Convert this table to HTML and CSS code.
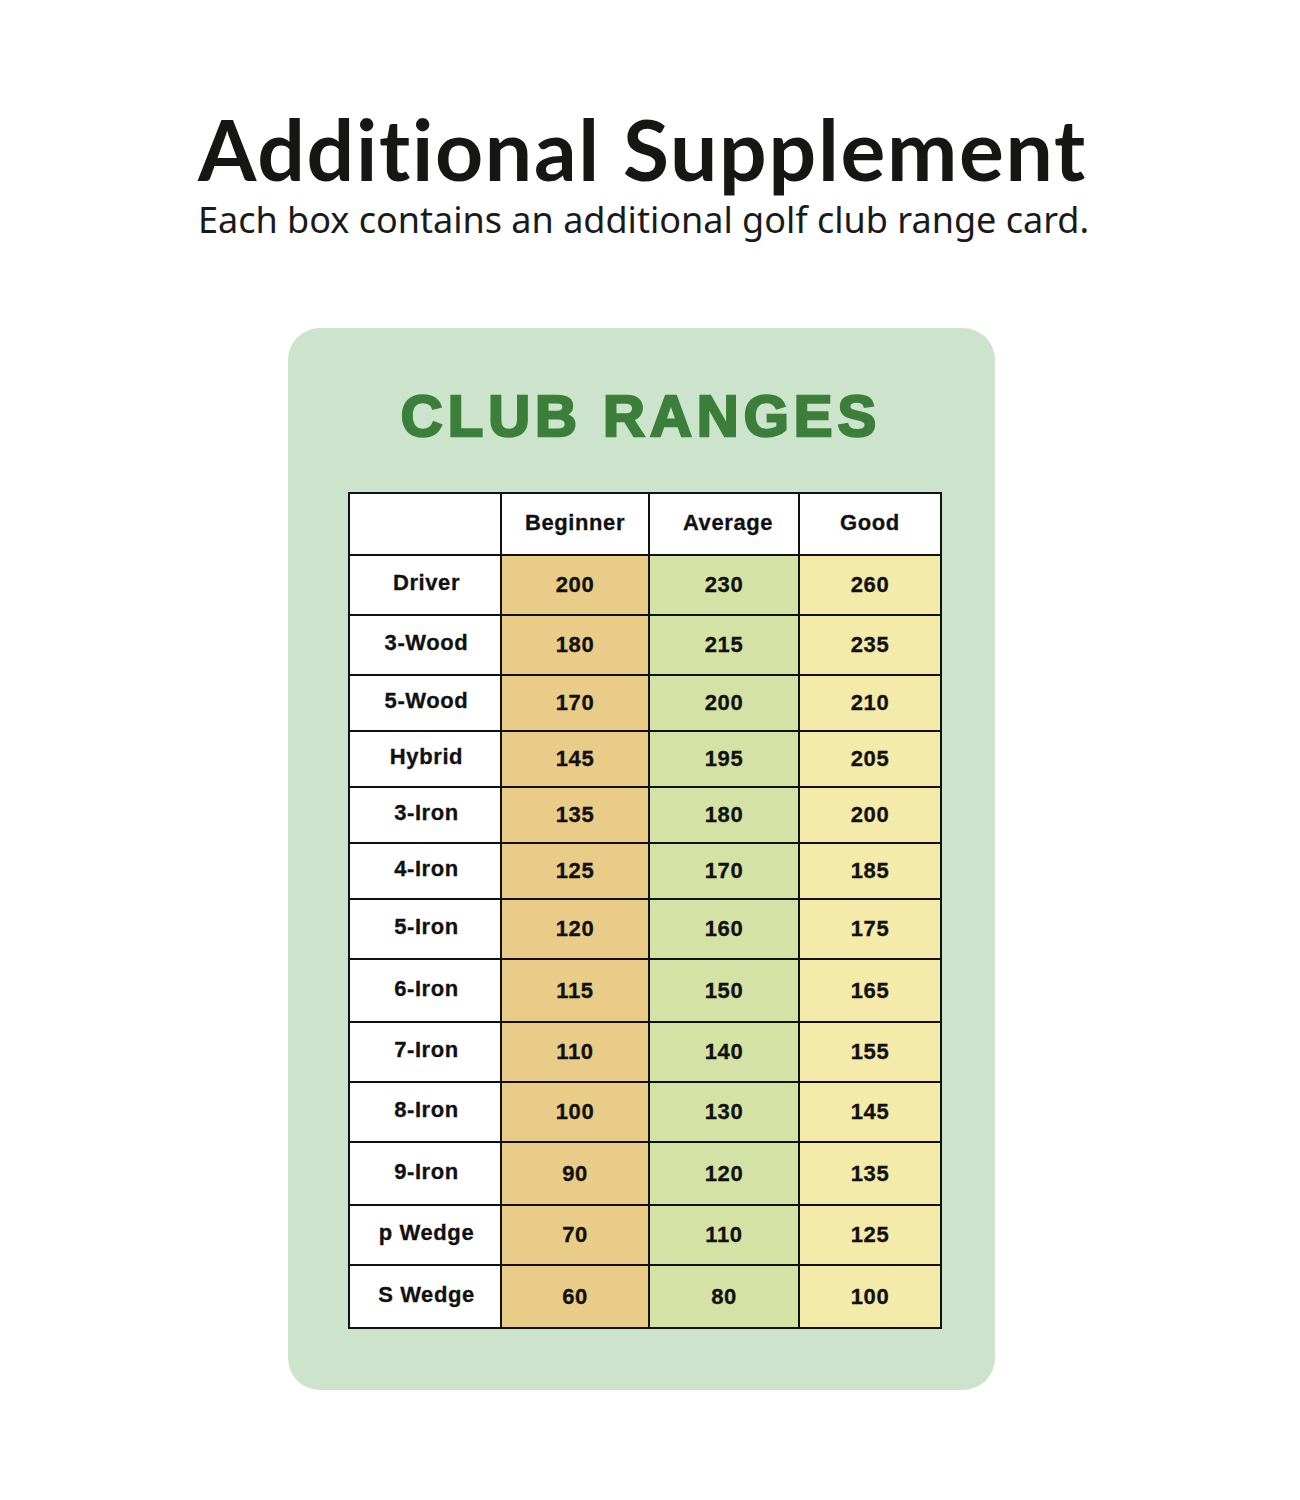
FILE: index.html
```html
<!DOCTYPE html>
<html>
<head>
<meta charset="utf-8">
<link rel="stylesheet" href="styles.css">
</head>
<body>
<header class="head">
  <h1 class="title">Additional Supplement</h1>
  <p class="subtitle">Each box contains an additional golf club range card.</p>
</header>
<section class="card">
  <h2 class="card-title">CLUB RANGES</h2>
  <table class="ranges">
    <thead>
      <tr><th class="c-club"></th><th>Beginner</th><th class="h-avg">Average</th><th>Good</th></tr>
    </thead>
    <tbody>
      <tr><td class="c-club">Driver</td><td class="b">200</td><td class="a">230</td><td class="g">260</td></tr>
      <tr><td class="c-club">3-Wood</td><td class="b">180</td><td class="a">215</td><td class="g">235</td></tr>
      <tr class="short"><td class="c-club">5-Wood</td><td class="b">170</td><td class="a">200</td><td class="g">210</td></tr>
      <tr class="short"><td class="c-club">Hybrid</td><td class="b">145</td><td class="a">195</td><td class="g">205</td></tr>
      <tr class="short"><td class="c-club">3-Iron</td><td class="b">135</td><td class="a">180</td><td class="g">200</td></tr>
      <tr class="short"><td class="c-club">4-Iron</td><td class="b">125</td><td class="a">170</td><td class="g">185</td></tr>
      <tr><td class="c-club">5-Iron</td><td class="b">120</td><td class="a">160</td><td class="g">175</td></tr>
      <tr class="tall"><td class="c-club">6-Iron</td><td class="b">115</td><td class="a">150</td><td class="g">165</td></tr>
      <tr><td class="c-club">7-Iron</td><td class="b">110</td><td class="a">140</td><td class="g">155</td></tr>
      <tr><td class="c-club">8-Iron</td><td class="b">100</td><td class="a">130</td><td class="g">145</td></tr>
      <tr class="tall"><td class="c-club">9-Iron</td><td class="b">90</td><td class="a">120</td><td class="g">135</td></tr>
      <tr><td class="c-club">p Wedge</td><td class="b">70</td><td class="a">110</td><td class="g">125</td></tr>
      <tr class="tall"><td class="c-club">S Wedge</td><td class="b">60</td><td class="a">80</td><td class="g">100</td></tr>
    </tbody>
  </table>
</section>
</body>
</html>
```
FILE: styles.css
```css
html, body {
  margin: 0;
  padding: 0;
  background: #ffffff;
}

body {
  width: 1300px;
  height: 1500px;
  overflow: hidden;
}

.head {
  padding: 104px 0 0 198px;
}

.title {
  margin: 0;
  font-family: "Lato", "Inter", sans-serif;
  font-weight: 700;
  font-size: 84px;
  line-height: 90px;
  color: #151715;
  letter-spacing: 1.7px;
  font-variant-ligatures: none;
  font-feature-settings: "liga" 0;
}

.subtitle {
  margin: 4px 0 0 0;
  font-family: "Noto Sans", "Open Sans", sans-serif;
  font-weight: 400;
  font-size: 36px;
  line-height: 44px;
  color: #1a1a1a;
}

.card {
  margin: 86px 0 0 288px;
  width: 707px;
  height: 1062px;
  box-sizing: border-box;
  background: #cde4cc;
  border-radius: 32px;
  padding: 56px 0 0 60px;
}

.card-title {
  margin: 0;
  width: 592px;
  box-sizing: border-box;
  padding-right: 6px;
  text-align: center;
  font-family: "Liberation Sans", Arial, sans-serif;
  font-weight: 700;
  font-size: 58px;
  line-height: 64px;
  color: #3b7f3a;
  letter-spacing: 5px;
  -webkit-text-stroke: 2.5px #3b7f3a;
}

.ranges {
  margin-top: 44px;
  border-collapse: collapse;
  width: 592px;
  table-layout: fixed;
  font-family: "Liberation Sans", Arial, sans-serif;
  font-weight: 700;
  font-size: 22px;
  letter-spacing: 0.6px;
  color: #111111;
}

.ranges th,
.ranges td {
  border: 2px solid #111111;
  text-align: center;
  padding: 0;
  height: 60px;
  box-sizing: border-box;
  background: #ffffff;
  -webkit-text-stroke: 0.3px #111111;
}

.ranges th {
  height: 62px;
  padding-bottom: 2px;
}

.ranges th.h-avg { padding-left: 8px; }

.ranges td.c-club { padding-bottom: 4px; padding-left: 3px; }

.ranges th:nth-child(1) { width: 152px; }
.ranges th:nth-child(2) { width: 148px; }
.ranges th:nth-child(3) { width: 150px; }
.ranges th:nth-child(4) { width: 142px; }

.ranges tr.short td { height: 56px; }
.ranges tr.tall td { height: 63px; }

.ranges td.b { background: #e8cc87; }
.ranges td.a { background: #d4e3a5; }
.ranges td.g { background: #f4eaa9; }
```
